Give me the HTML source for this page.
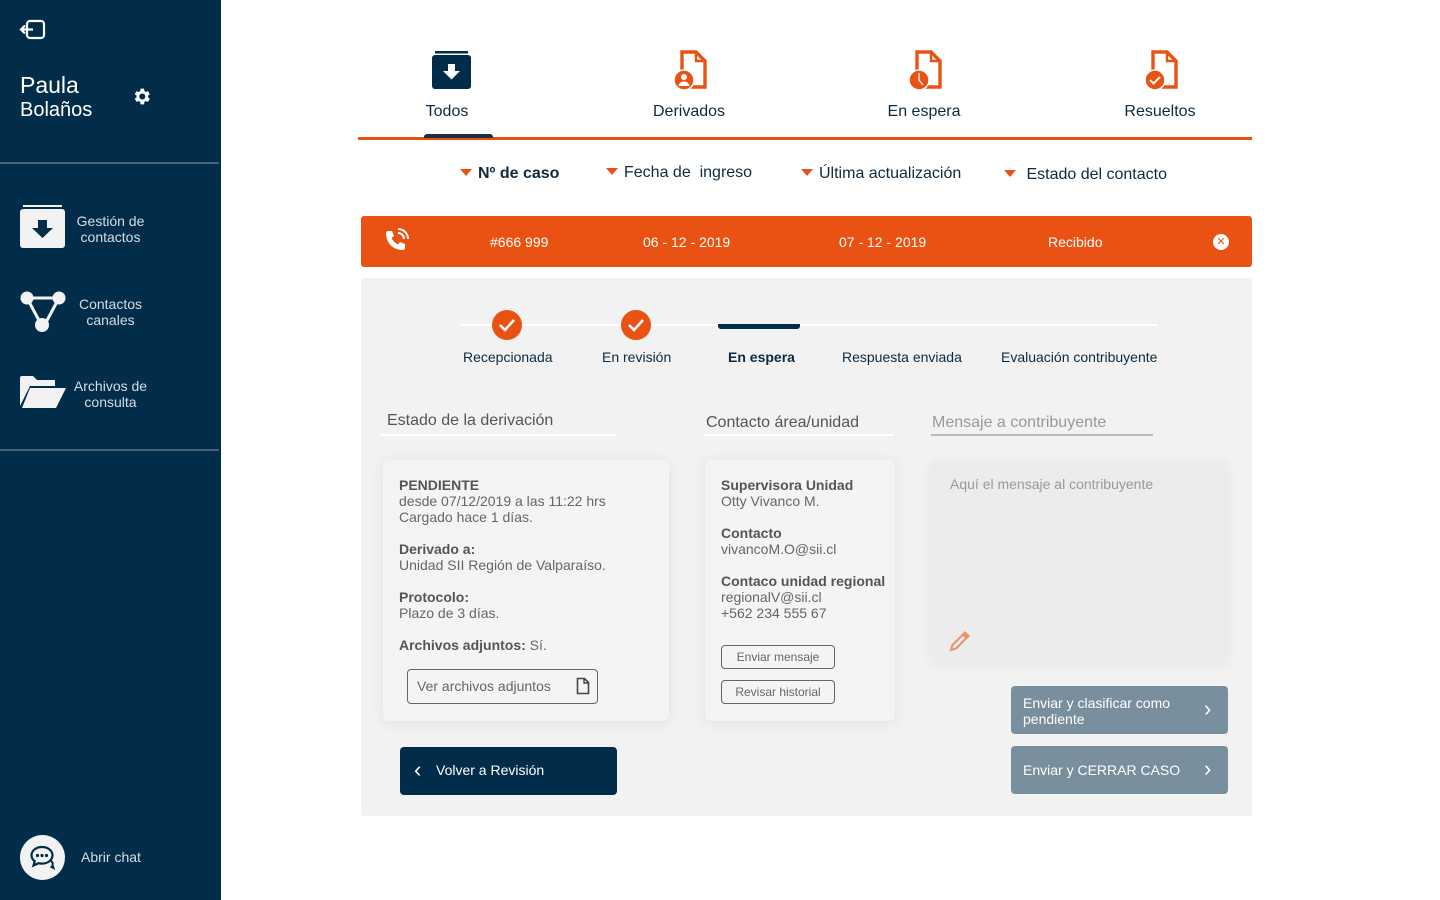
<!DOCTYPE html>
<html><head><meta charset="utf-8">
<style>
*{margin:0;padding:0;box-sizing:border-box}
body{width:1440px;height:900px;position:relative;background:#fff;font-family:"Liberation Sans",Roboto,sans-serif;overflow:hidden}
.a{position:absolute}
.sb{left:0;top:0;width:221px;height:900px;background:#012d4a}
.hr{height:2px;background:#4a6275;left:0;width:219px}
.nav{color:#d6dde3;font-size:14px;line-height:16px;text-align:center}
.tab{font-size:16px;color:#0d2a40;text-align:center;width:140px}
.flt{font-size:16px;color:#0d2a40}
.tri{display:inline-block;width:0;height:0;border-left:6px solid transparent;border-right:6px solid transparent;border-top:7px solid #ea5213;margin-right:6px;vertical-align:2px}
.wt{color:#fff;font-size:14px}
.step{font-size:14px;color:#0d2a40}
.chk{width:30px;height:30px;border-radius:50%;background:#ea5213}
.sh{font-size:16px;color:#555}
.card{background:#f4f4f4;border-radius:6px;box-shadow:0 2px 14px rgba(0,0,0,.08)}
.ct{font-size:14px;color:#666;line-height:16px}
.ct b{color:#555}
.ob{border:1px solid #666;border-radius:4px;font-size:12px;color:#666;text-align:center}
.gb{background:#7a8f9e;border-radius:4px;color:#fff;font-size:14px;line-height:16px}
.chev{color:#fff;font-size:22px;line-height:22px}
</style></head><body>
<div class="a sb"></div>
<svg class="a" style="left:19px;top:19px" width="28" height="22" viewBox="0 0 28 22"><rect x="8" y="2" width="17" height="17" rx="3" fill="none" stroke="#fff" stroke-width="2.2"/><path d="M2 10.5h12M6 6.5l-4 4 4 4" fill="none" stroke="#fff" stroke-width="2.2"/></svg>
<div class="a" style="left:20px;top:73px;color:#fff;font-size:23px;line-height:24px">Paula</div>
<div class="a" style="left:20px;top:99px;color:#fff;font-size:20px;line-height:22px">Bolaños</div>
<svg class="a" style="left:131px;top:86px" width="21" height="21" viewBox="0 0 24 24"><path fill="#fff" d="M19.4 13a7.5 7.5 0 0 0 0-2l2.1-1.6-2-3.5-2.5 1a7 7 0 0 0-1.7-1L14.9 3h-4l-.4 2.9a7 7 0 0 0-1.7 1l-2.5-1-2 3.5L6.4 11a7.5 7.5 0 0 0 0 2l-2.1 1.6 2 3.5 2.5-1a7 7 0 0 0 1.7 1l.4 2.9h4l.4-2.9a7 7 0 0 0 1.7-1l2.5 1 2-3.5zM12.9 15.5a3.5 3.5 0 1 1 0-7 3.5 3.5 0 0 1 0 7z"/></svg>
<div class="a hr" style="top:162px"></div>
<div class="a hr" style="top:449px"></div>
<svg class="a" style="left:20px;top:205px" width="45" height="43" viewBox="0 0 45 43"><rect x="0" y="4" width="45" height="39" rx="3" fill="#f2f2f2"/><rect x="3" y="0" width="39" height="2" fill="#f2f2f2"/><path d="M18 15h9v8h6l-10.5 10L12 23h6z" fill="#012d4a"/></svg>
<div class="a nav" style="left:70px;top:213px;width:81px">Gestión de contactos</div>
<svg class="a" style="left:20px;top:291px" width="46" height="42" viewBox="0 0 46 42"><path d="M7 7h32M7 7l15 28M39 7L24 35" stroke="#f2f2f2" stroke-width="3"/><circle cx="7" cy="7" r="6.5" fill="#f2f2f2"/><circle cx="39" cy="7" r="6.5" fill="#f2f2f2"/><circle cx="22" cy="34" r="7" fill="#f2f2f2"/></svg>
<div class="a nav" style="left:70px;top:296px;width:81px">Contactos canales</div>
<svg class="a" style="left:20px;top:376px" width="46" height="32" viewBox="0 0 46 32"><path d="M0 2a2 2 0 0 1 2-2h11l4 4h18v6H10L0 30z" fill="#f2f2f2"/><path d="M10 12h36l-10 20H2z" fill="#f2f2f2"/></svg>
<div class="a nav" style="left:70px;top:378px;width:81px">Archivos de consulta</div>
<div class="a" style="left:20px;top:835px;width:45px;height:45px;border-radius:50%;background:#f2f2f2"></div>
<svg class="a" style="left:27px;top:842px" width="31" height="31" viewBox="0 0 31 31"><path d="M15 5c-6 0-10.5 3.7-10.5 8.3 0 2.4 1.2 4.5 3.2 6L6.5 23.5l5-2.3c1.1.3 2.3.4 3.5.4 6 0 10.5-3.7 10.5-8.3S21 5 15 5z" fill="none" stroke="#012d4a" stroke-width="2.2"/><path d="M24 19c1.5 1 2 2.5 1.5 4l1 3-3-1.5" fill="none" stroke="#012d4a" stroke-width="2"/><circle cx="10.5" cy="13.5" r="1.6" fill="#012d4a"/><circle cx="15" cy="13.5" r="1.6" fill="#012d4a"/><circle cx="19.5" cy="13.5" r="1.6" fill="#012d4a"/></svg>
<div class="a" style="left:81px;top:849px;color:#d6dde3;font-size:14px">Abrir chat</div>

<svg class="a" style="left:432px;top:51px" width="39" height="38" viewBox="0 0 39 38"><rect x="0" y="4" width="39" height="34" rx="3" fill="#012d4a"/><rect x="3" y="0" width="33" height="2.5" fill="#012d4a"/><path d="M16 13h7v7h5l-8.5 8.5L11 20h5z" fill="#fff"/></svg>
<svg class="a" style="left:672px;top:50px" width="38" height="40" viewBox="0 0 38 40"><path d="M10 2h14l9 9v26H10z" fill="none" stroke="#ea5213" stroke-width="3.4"/><path d="M24 2v9h9" fill="none" stroke="#ea5213" stroke-width="2.4"/><circle cx="12" cy="30" r="10" fill="#ea5213" stroke="#fff" stroke-width="1.5"/><circle cx="12" cy="27" r="3" fill="#fff"/><path d="M6.5 36a5.5 4.5 0 0 1 11 0z" fill="#fff"/></svg>
<svg class="a" style="left:907px;top:50px" width="38" height="40" viewBox="0 0 38 40"><path d="M10 2h14l9 9v26H10z" fill="none" stroke="#ea5213" stroke-width="3.4"/><path d="M24 2v9h9" fill="none" stroke="#ea5213" stroke-width="2.4"/><circle cx="12" cy="30" r="10" fill="#ea5213" stroke="#fff" stroke-width="1.5"/><path d="M12 23v7l4 5" fill="none" stroke="#fff" stroke-width="1.3"/></svg>
<svg class="a" style="left:1143px;top:50px" width="38" height="40" viewBox="0 0 38 40"><path d="M10 2h14l9 9v26H10z" fill="none" stroke="#ea5213" stroke-width="3.4"/><path d="M24 2v9h9" fill="none" stroke="#ea5213" stroke-width="2.4"/><circle cx="12" cy="30" r="10" fill="#ea5213" stroke="#fff" stroke-width="1.5"/><path d="M7 30l3.5 3.5L17 27" fill="none" stroke="#fff" stroke-width="2"/></svg>
<div class="a tab" style="left:377px;top:103px">Todos</div>
<div class="a tab" style="left:619px;top:103px">Derivados</div>
<div class="a tab" style="left:854px;top:103px">En espera</div>
<div class="a tab" style="left:1090px;top:103px">Resueltos</div>
<div class="a" style="left:358px;top:137px;width:894px;height:3px;background:#ea5213"></div>
<div class="a" style="left:424px;top:134px;width:69px;height:4px;background:#1e2e3a;border-radius:3px 3px 0 0"></div>

<div class="a flt" style="left:460px;top:165px;font-weight:bold"><span class="tri"></span>Nº de caso</div>
<div class="a flt" style="left:606px;top:164px"><span class="tri"></span>Fecha de&nbsp; ingreso</div>
<div class="a flt" style="left:801px;top:165px"><span class="tri"></span>Última actualización</div>
<div class="a flt" style="left:1004px;top:166px"><span class="tri"></span>&nbsp;Estado del contacto</div>

<div class="a" style="left:361px;top:216px;width:891px;height:51px;background:#ea5213;border-radius:3px"></div>
<svg class="a" style="left:383px;top:228px" width="26" height="26" viewBox="0 0 26 26"><path d="M5 3l4 0 2 5-2.5 2c1.2 2.8 3.5 5 6.5 6.5l2-2.5 5 2v4c0 1-1 2-2 2C10 22 3 15 3 5c0-1 1-2 2-2z" fill="#fff"/><path d="M15 5a6 6 0 0 1 6 6M15 1a10 10 0 0 1 10 10" fill="none" stroke="#fff" stroke-width="2"/></svg>
<div class="a wt" style="left:490px;top:234px">#666 999</div>
<div class="a wt" style="left:643px;top:234px">06 - 12 - 2019</div>
<div class="a wt" style="left:839px;top:234px">07 - 12 - 2019</div>
<div class="a wt" style="left:1048px;top:234px">Recibido</div>
<div class="a" style="left:1213px;top:234px;width:16px;height:16px;border-radius:50%;background:#fff;color:#ea5213;font-size:11px;line-height:16px;text-align:center">✕</div>

<div class="a" style="left:361px;top:278px;width:891px;height:538px;background:#f2f2f2;border-radius:3px"></div>
<div class="a" style="left:461px;top:324px;width:697px;height:2px;background:#fff"></div>
<div class="a" style="left:718px;top:324px;width:82px;height:5px;background:#012d4a;border-radius:0 0 3px 3px"></div>
<div class="a chk" style="left:492px;top:310px"></div>
<svg class="a" style="left:492px;top:310px" width="30" height="30"><path d="M8 15l5 5 9-10" fill="none" stroke="#fff" stroke-width="2.5"/></svg>
<div class="a chk" style="left:621px;top:310px"></div>
<svg class="a" style="left:621px;top:310px" width="30" height="30"><path d="M8 15l5 5 9-10" fill="none" stroke="#fff" stroke-width="2.5"/></svg>
<div class="a step" style="left:463px;top:349px">Recepcionada</div>
<div class="a step" style="left:602px;top:349px">En revisión</div>
<div class="a step" style="left:728px;top:349px;font-weight:bold">En espera</div>
<div class="a step" style="left:842px;top:349px">Respuesta enviada</div>
<div class="a step" style="left:1001px;top:349px">Evaluación contribuyente</div>

<div class="a sh" style="left:387px;top:412px">Estado de la derivación</div>
<div class="a" style="left:380px;top:434px;width:236px;height:2px;background:#fff"></div>
<div class="a sh" style="left:706px;top:414px">Contacto área/unidad</div>
<div class="a" style="left:704px;top:434px;width:190px;height:2px;background:#fff"></div>
<div class="a sh" style="left:932px;top:414px;color:#999">Mensaje a contribuyente</div>
<div class="a" style="left:931px;top:434px;width:222px;height:2px;background:#bbb"></div>

<div class="a card" style="left:383px;top:460px;width:286px;height:261px"></div>
<div class="a ct" style="left:399px;top:477px"><b>PENDIENTE</b><br>desde 07/12/2019 a las 11:22 hrs<br>Cargado hace 1 días.<br><br><b>Derivado a:</b><br>Unidad SII Región de Valparaíso.<br><br><b>Protocolo:</b><br>Plazo de 3 días.<br><br><b>Archivos adjuntos:</b> Sí.</div>
<div class="a ob" style="left:407px;top:669px;width:191px;height:35px;font-size:14px;text-align:left;padding:8px 0 0 9px">Ver archivos adjuntos</div>
<svg class="a" style="left:576px;top:677px" width="14" height="18"><path d="M1.5 1.5h7l4 4v11h-11z" fill="none" stroke="#444" stroke-width="1.6"/><path d="M8 1.5v4.5h4.5" fill="none" stroke="#444" stroke-width="1.4"/></svg>

<div class="a card" style="left:705px;top:460px;width:190px;height:261px"></div>
<div class="a ct" style="left:721px;top:477px"><b>Supervisora Unidad</b><br>Otty Vivanco M.<br><br><b>Contacto</b><br>vivancoM.O@sii.cl<br><br><b>Contaco unidad regional</b><br>regionalV@sii.cl<br>+562 234 555 67</div>
<div class="a ob" style="left:721px;top:645px;width:114px;height:24px;line-height:22px">Enviar mensaje</div>
<div class="a ob" style="left:721px;top:680px;width:114px;height:24px;line-height:22px">Revisar historial</div>

<div class="a" style="left:931px;top:460px;width:297px;height:203px;background:#ececec;border-radius:6px;box-shadow:0 2px 12px rgba(0,0,0,.05)"></div>
<div class="a" style="left:950px;top:476px;font-size:14px;color:#999">Aquí el mensaje al contribuyente</div>
<svg class="a" style="left:948px;top:629px" width="24" height="24" viewBox="0 0 24 24"><path d="M3 21l1.5-5L15 5.5l3.5 3.5L8 19.5z M15 5.5l2-2 3.5 3.5-2 2" fill="none" stroke="#e8916a" stroke-width="2"/><path d="M17 3.5l3.5 3.5-2 2L15 5.5z" fill="#e8916a"/></svg>

<div class="a" style="left:400px;top:747px;width:217px;height:48px;background:#012d4a;border-radius:4px"></div>
<div class="a chev" style="left:414px;top:759px">‹</div>
<div class="a" style="left:436px;top:762px;color:#fff;font-size:14px">Volver a Revisión</div>

<div class="a gb" style="left:1011px;top:686px;width:217px;height:48px;padding:9px 0 0 12px">Enviar y clasificar como<br>pendiente</div>
<div class="a chev" style="left:1204px;top:698px">›</div>
<div class="a gb" style="left:1011px;top:746px;width:217px;height:48px;padding:16px 0 0 12px">Enviar y CERRAR CASO</div>
<div class="a chev" style="left:1204px;top:758px">›</div>
</body></html>
